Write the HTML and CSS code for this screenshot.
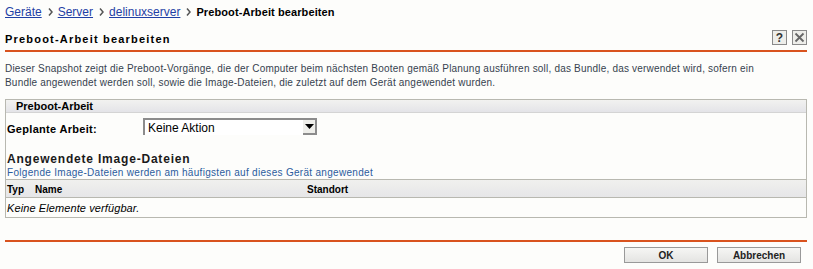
FILE: index.html
```html
<!DOCTYPE html>
<html lang="de">
<head>
    <meta charset="UTF-8">
    <title>Preboot-Arbeit bearbeiten</title>
    <link rel="stylesheet" href="styles.css">
</head>
<body>
    <div class="page">
        <div class="crumbs">
            <a href="#">Geräte</a>
            <svg class="sep" width="5" height="8" viewBox="0 0 5 8"><path d="M1 0.5 L4 4 L1 7.5" fill="none" stroke="#555" stroke-width="1.5"/></svg>
            <a href="#">Server</a>
            <svg class="sep" width="5" height="8" viewBox="0 0 5 8"><path d="M1 0.5 L4 4 L1 7.5" fill="none" stroke="#555" stroke-width="1.5"/></svg>
            <a href="#">delinuxserver</a>
            <svg class="sep" width="5" height="8" viewBox="0 0 5 8"><path d="M1 0.5 L4 4 L1 7.5" fill="none" stroke="#555" stroke-width="1.5"/></svg>
            <b>Preboot-Arbeit bearbeiten</b>
        </div>

        <div class="title-bar">
            <h1>Preboot-Arbeit bearbeiten</h1>
            <div class="title-icons">
                <span class="icon-btn help">?</span>
                <span class="icon-btn close">
                    <svg width="11" height="11" viewBox="0 0 11 11">
                        <path d="M1.5 1.5 L9.5 9.5 M9.5 1.5 L1.5 9.5" stroke="#666" stroke-width="1.8"/>
                    </svg>
                </span>
            </div>
        </div>

        <p class="intro">Dieser Snapshot zeigt die Preboot-Vorgänge, die der Computer beim nächsten Booten gemäß Planung ausführen soll, das Bundle, das verwendet wird, sofern ein Bundle angewendet werden soll, sowie die Image-Dateien, die zuletzt auf dem Gerät angewendet wurden.</p>

        <div class="panel">
            <div class="panel-head">Preboot-Arbeit</div>
            <div class="field-row">
                <label class="field-label">Geplante Arbeit:</label>
                <div class="select">
                    <span class="select-value">Keine Aktion</span>
                    <span class="select-arrow">
                        <svg width="9" height="5" viewBox="0 0 9 5"><path d="M0 0 H9 L4.5 5 Z" fill="#000"/></svg>
                    </span>
                </div>
            </div>

            <div class="section-title">Angewendete Image-Dateien</div>
            <div class="section-note">Folgende Image-Dateien werden am häufigsten auf dieses Gerät angewendet</div>

            <div class="table-head">
                <span class="col-typ">Typ</span>
                <span class="col-name">Name</span>
                <span class="col-ort">Standort</span>
            </div>
            <div class="table-empty">Keine Elemente verfügbar.</div>
        </div>

        <div class="footer">
            <button class="btn">OK</button>
            <button class="btn">Abbrechen</button>
        </div>
    </div>
</body>
</html>
```

FILE: styles.css
```css
body {
    margin: 0;
    background: #fdfdfb;
    font-family: "Liberation Sans", Arial, sans-serif;
    font-size: 11px;
    color: #000;
}

.page {
    padding: 0 6px 0 5px;
}

.crumbs {
    display: flex;
    align-items: center;
    height: 24px;
    font-size: 12px;
}

.crumbs a {
    color: #1f3fa5;
}

.crumbs b {
    font-size: 11px;
    letter-spacing: 0.1px;
}

.crumbs .sep {
    margin: 0 5px 0 6px;
}

.title-bar {
    display: flex;
    align-items: center;
    justify-content: space-between;
    height: 26px;
    border-bottom: 2px solid #d9531e;
}

h1 {
    margin: 0;
    padding-top: 3px;
    font-size: 11px;
    letter-spacing: 1.2px;
}

.title-icons {
    display: flex;
    gap: 5px;
    padding-top: 1px;
}

.icon-btn {
    display: flex;
    align-items: center;
    justify-content: center;
    box-sizing: border-box;
    width: 15px;
    height: 15px;
    border: 1px solid #8a8a8a;
    background: #eeeeea;
    font-weight: bold;
    font-size: 12px;
    color: #333;
}

.intro {
    margin: 10px 0 10px;
    padding-right: 24px;
    font-size: 10px;
    line-height: 13.5px;
    letter-spacing: 0.2px;
    color: #36424f;
}

.panel {
    border: 1px solid #b8b8b0;
}

.panel-head {
    height: 12px;
    padding-left: 10px;
    font-weight: bold;
    font-size: 11px;
    line-height: 13px;
    background: linear-gradient(#f2f2f0, #e4e4e8);
    border-bottom: 1px solid #d4d4d4;
}

.field-row {
    display: flex;
    align-items: center;
    padding-top: 5px;
}

.field-label {
    width: 136px;
    padding: 4px 0 0 1px;
    font-weight: bold;
    letter-spacing: 0.3px;
}

.select {
    display: flex;
    align-items: center;
    justify-content: space-between;
    box-sizing: border-box;
    width: 174px;
    height: 17px;
    border-top: 2px solid #8c8c8c;
    border-left: 2px solid #8c8c8c;
    background: #fff;
    font-size: 12px;
}

.select-value {
    padding-left: 3px;
}

.select-arrow {
    display: flex;
    align-items: center;
    justify-content: center;
    box-sizing: border-box;
    width: 14px;
    height: 15px;
    border-right: 2px solid #8c8c8c;
    border-bottom: 2px solid #8c8c8c;
    background: #eeeeea;
}

.section-title {
    margin-top: 17px;
    height: 15px;
    line-height: 15px;
    padding-left: 1px;
    font-size: 12px;
    font-weight: bold;
    letter-spacing: 0.8px;
    color: #1a1a1a;
}

.section-note {
    height: 12px;
    line-height: 12px;
    padding-left: 1px;
    font-size: 10px;
    letter-spacing: 0.3px;
    color: #2b5c9e;
}

.table-head {
    display: flex;
    height: 17px;
    line-height: 19px;
    padding-left: 1px;
    font-weight: bold;
    font-size: 10px;
    background: linear-gradient(#f0f0ee, #e6e6e8);
    border-top: 1px solid #b8b8b0;
    border-bottom: 1px solid #b8b8b0;
}

.col-typ {
    width: 28px;
}

.col-name {
    width: 272px;
}

.table-empty {
    height: 19px;
    line-height: 20px;
    padding-left: 1px;
    font-style: italic;
    letter-spacing: 0.1px;
}

.footer {
    display: flex;
    justify-content: flex-end;
    gap: 9px;
    margin-top: 22px;
    padding: 5px 6px 0 0;
    border-top: 2px solid #d9531e;
}

.btn {
    width: 84px;
    height: 16px;
    padding: 0;
    border: 1px solid #999;
    background: linear-gradient(#f6f6f4, #e4e4e2);
    font-family: "Liberation Sans", Arial, sans-serif;
    font-size: 10px;
    font-weight: bold;
    color: #222;
}
```
